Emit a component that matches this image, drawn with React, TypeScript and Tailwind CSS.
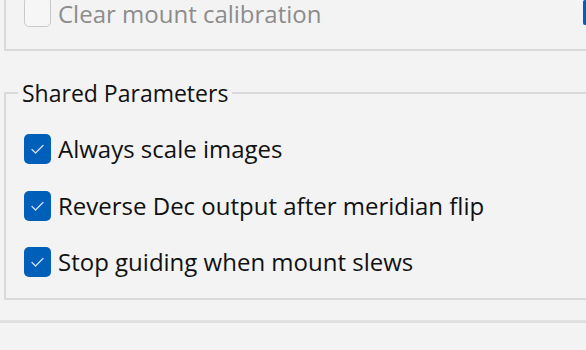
import React from "react";

const font = { fontFamily: '"Open Sans", "Noto Sans", sans-serif' };

const CheckBox = ({ checked }: { checked: boolean }) =>
  checked ? (
    <div className="flex h-[30px] w-[27px] shrink-0 items-center justify-center rounded-[5px] bg-[#005fb8]">
      <svg width="15" height="12" viewBox="0 0 15 12" fill="none">
        <path d="M2 6.5 L5.5 10 L13 2.5" stroke="#c9dcf2" strokeWidth="1.4" strokeLinecap="round" strokeLinejoin="round" />
      </svg>
    </div>
  ) : (
    <div className="h-[30px] w-[27px] shrink-0 rounded-[5px] border-[1.5px] border-[#c9c9c9] bg-[#f6f6f6]" />
  );

const Option = ({ label, checked }: { label: string; checked: boolean }) => (
  <div className="flex h-[56.5px] items-center gap-[7px] pl-[18px]">
    <CheckBox checked={checked} />
    <span className="whitespace-nowrap text-[24px] leading-[30px] text-[#111111]">{label}</span>
  </div>
);

export default function App() {
  return (
    <div className="relative h-[350px] w-[586px] overflow-hidden bg-[#f3f3f3]" style={font}>
      <div className="absolute right-0 top-0 h-[25px] w-[3px] rounded-l-[2px] bg-[#005fb8]" />

      <div className="ml-[4px] mt-[-3px] h-[54px] w-[640px] border-b-2 border-l-2 border-[#dadada]">
        <div className="flex h-[30px] items-center gap-[7px] pl-[18px]">
          <CheckBox checked={false} />
          <span className="mt-[3px] whitespace-nowrap text-[24px] leading-[30px] text-[#8c8c8c]">Clear mount calibration</span>
        </div>
      </div>

      <fieldset className="ml-[4px] mt-[27px] w-[640px] border-2 border-[#dadada] pb-[7px]">
        <legend className="ml-[12px] px-[4px] text-[23px] leading-[30px] text-[#111111]">Shared Parameters</legend>
        <div className="pt-[13px]">
          <Option label="Always scale images" checked />
          <Option label="Reverse Dec output after meridian flip" checked />
          <Option label="Stop guiding when mount slews" checked />
        </div>
      </fieldset>

      <div className="mt-[20px] w-full border-t-[3px] border-[#e0e0e0]" />
    </div>
  );
}
